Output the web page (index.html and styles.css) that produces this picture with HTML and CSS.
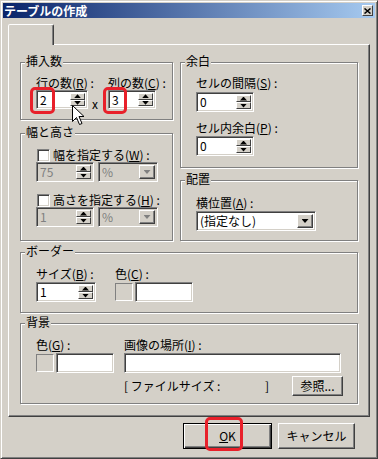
FILE: index.html
```html
<!DOCTYPE html>
<html lang="ja">
<head>
    <meta charset="UTF-8">
    <meta name="viewport" content="width=device-width, initial-scale=1.0">
    <title>テーブルの作成</title>
    <link rel="stylesheet" href="styles.css">
</head>
<body>
<div class="window">
    <div class="titlebar">
        <span class="title">テーブルの作成</span>
        <span class="close">
            <svg width="7" height="6" viewBox="0 0 7 6"><path d="M0.5 0.5 L6.5 5.5 M6.5 0.5 L0.5 5.5" stroke="#000" stroke-width="1.5"/></svg>
        </span>
    </div>

    <div class="body">
        <div class="tab"></div>
        <div class="panel">
            <div class="top">
                <div class="col-left">
                    <!-- 挿入数 -->
                    <div class="group g-insert">
                        <span class="legend">挿入数</span>
                        <div class="row row-end">
                            <div class="field w52">
                                <div class="lbl">行の数(<u>R</u>) :</div>
                                <div class="spin short"><span class="val">2</span><span class="arrows"><i class="up"></i><i class="dn"></i></span></div>
                            </div>
                            <span class="times">x</span>
                            <div class="field w48">
                                <div class="lbl">列の数(<u>C</u>) :</div>
                                <div class="spin short"><span class="val">3</span><span class="arrows"><i class="up"></i><i class="dn"></i></span></div>
                            </div>
                        </div>
                    </div>

                    <!-- 幅と高さ -->
                    <div class="group g-size">
                        <span class="legend">幅と高さ</span>
                        <div class="chkrow"><span class="chk"></span><span>幅を指定する(<u>W</u>) :</span></div>
                        <div class="ctlrow">
                            <div class="spin dis w58"><span class="val">75</span><span class="arrows"><i class="up"></i><i class="dn"></i></span></div>
                            <div class="combo dis w60"><span class="val">%</span><span class="drop"></span></div>
                        </div>
                        <div class="chkrow second"><span class="chk"></span><span>高さを指定する(<u>H</u>) :</span></div>
                        <div class="ctlrow">
                            <div class="spin dis w58"><span class="val">1</span><span class="arrows"><i class="up"></i><i class="dn"></i></span></div>
                            <div class="combo dis w60"><span class="val">%</span><span class="drop"></span></div>
                        </div>
                    </div>
                </div>

                <div class="col-right">
                    <!-- 余白 -->
                    <div class="group g-margin">
                        <span class="legend">余白</span>
                        <div class="lbl">セルの間隔(<u>S</u>) :</div>
                        <div class="spin w58 gap-top"><span class="val">0</span><span class="arrows"><i class="up"></i><i class="dn"></i></span></div>
                        <div class="lbl second">セル内余白(<u>P</u>) :</div>
                        <div class="spin w58 gap-top1"><span class="val">0</span><span class="arrows"><i class="up"></i><i class="dn"></i></span></div>
                    </div>

                    <!-- 配置 -->
                    <div class="group g-align">
                        <span class="legend">配置</span>
                        <div class="lbl">横位置(<u>A</u>) :</div>
                        <div class="combo w120 gap-top1"><span class="val">(指定なし)</span><span class="drop"></span></div>
                    </div>
                </div>
            </div>

            <!-- ボーダー -->
            <div class="group g-border">
                <span class="legend">ボーダー</span>
                <div class="row">
                    <div class="field w60">
                        <div class="lbl">サイズ(<u>B</u>) :</div>
                        <div class="spin gap-top1"><span class="val">1</span><span class="arrows"><i class="up"></i><i class="dn"></i></span></div>
                    </div>
                    <div class="field w78 color-field">
                        <div class="lbl">色(<u>C</u>) :</div>
                        <div class="colorpick gap-top1"><span class="swatch"></span><span class="tb w58"></span></div>
                    </div>
                </div>
            </div>

            <!-- 背景 -->
            <div class="group g-bg">
                <span class="legend">背景</span>
                <div class="row">
                    <div class="field w78">
                        <div class="lbl">色(<u>G</u>) :</div>
                        <div class="colorpick gap-top1"><span class="swatch"></span><span class="tb w58"></span></div>
                    </div>
                    <div class="field w217 img-field">
                        <div class="lbl">画像の場所(<u>I</u>) :</div>
                        <div class="tb gap-top1"></div>
                        <div class="fsrow">
                            <span class="fs">[ ファイルサイズ :</span>
                            <span class="fs-end">]</span>
                            <button class="btn browse">参照...</button>
                        </div>
                    </div>
                </div>
            </div>
        </div>

        <div class="buttons">
            <button class="btn default ok"><u>O</u>K</button>
            <button class="btn cancel">キャンセル</button>
        </div>
    </div>

    <!-- highlight marks and mouse pointer drawn over the dialog -->
    <span class="mark m-rows"></span>
    <span class="mark m-cols"></span>
    <span class="mark m-ok"></span>
    <svg class="pointer" width="13" height="21" viewBox="0 0 13 21">
        <path d="M0.5 0.5 L0.5 16.5 L4.5 12.5 L7.5 19.5 L10 18.5 L7 11.5 L12 11.5 Z" fill="#fff" stroke="#000" stroke-width="1" stroke-linejoin="miter"/>
    </svg>
</div>
</body>
</html>
```

FILE: styles.css
```css
* {
    box-sizing: border-box;
}
body {
    margin: 0;
    font-family: "Noto Sans CJK JP", "Liberation Sans", sans-serif;
    font-size: 12px;
    line-height: 14px;
    color: #000;
    background: #d4d0c8;
}
u {
    text-decoration: underline;
    text-underline-offset: 1px;
}

/* window frame */
.window {
    position: relative;
    width: 378px;
    height: 459px;
    padding: 2px;
    background: #d4d0c8;
    border: 1px solid;
    border-color: #d4d0c8 #404040 #404040 #d4d0c8;
    box-shadow: inset 1px 1px #fff, inset -1px -1px #808080;
}
.titlebar {
    display: flex;
    align-items: center;
    height: 15px;
    padding: 0 2px 0 1px;
    background: linear-gradient(to right, #0a246a, #a6caf0);
    color: #fff;
    font-weight: bold;
}
.title {
    flex: 1;
    line-height: 15px;
}
.close {
    display: flex;
    align-items: center;
    justify-content: center;
    width: 11px;
    height: 11px;
    background: #d4d0c8;
    border: 1px solid;
    border-color: #fff #404040 #404040 #fff;
}

.body {
    padding: 6px 5px 0;
}
.tab {
    position: relative;
    z-index: 1;
    width: 46px;
    height: 21px;
    margin-bottom: -1px;
    background: #d4d0c8;
    border: 1px solid;
    border-bottom: none;
    border-color: #fff #404040 transparent #fff;
    border-radius: 2px 2px 0 0;
    box-shadow: inset -1px 0 #808080;
}
.panel {
    height: 373px;
    padding: 17px 11px 0;
    border: 1px solid;
    border-color: #fff #404040 #404040 #fff;
    box-shadow: inset -1px -1px #808080;
}

/* group boxes */
.top {
    display: flex;
    gap: 7px;
}
.col-left {
    width: 153px;
}
.col-right {
    flex: 1;
}
.group {
    position: relative;
    padding-left: 15px;
    border: 1px solid #808080;
    box-shadow: inset 1px 1px #fff, 1px 1px #fff;
}
.legend {
    position: absolute;
    top: -9px;
    left: 4px;
    padding: 0 1px;
    background: #d4d0c8;
    white-space: nowrap;
}
.g-insert {
    height: 58px;
    padding-top: 13px;
}
.g-size {
    height: 108px;
    margin-top: 13px;
    padding-top: 14px;
}
.g-margin {
    height: 106px;
    padding-top: 13px;
}
.g-align {
    height: 61px;
    margin-top: 12px;
    padding-top: 15px;
}
.g-border {
    height: 61px;
    margin-top: 11px;
    padding-top: 14px;
}
.g-bg {
    height: 81px;
    margin-top: 10px;
    padding-top: 14px;
}

.row {
    display: flex;
    align-items: flex-start;
}
.row-end {
    align-items: flex-end;
}
.field {
    flex: none;
}
.lbl {
    white-space: nowrap;
}
.lbl.second {
    margin-top: 9px;
}
.gap-top {
    margin-top: 2px;
}
.gap-top1 {
    margin-top: 1px;
}
.times {
    width: 20px;
    padding: 4px 0 0 4px;
    margin-bottom: -4px;
    line-height: 19px;
}
.color-field {
    margin-left: 19px;
}
.img-field {
    margin-left: 10px;
}

.w48 { width: 48px; }
.w52 { width: 52px; }
.w58 { width: 58px; }
.w60 { width: 60px; }
.w78 { width: 78px; }
.w120 { width: 120px; }
.w217 { width: 217px; }

/* sunken controls */
.spin, .combo, .tb, .chk {
    background: #fff;
    border: 1px solid;
    border-color: #808080 #fff #fff #808080;
    box-shadow: inset 1px 1px #404040, inset -1px -1px #d4d0c8;
}
.spin, .combo {
    display: flex;
    align-items: center;
    height: 20px;
    padding: 2px 2px 2px 3px;
}
.field .spin {
    width: 100%;
}
.spin.short {
    height: 19px;
}
.val {
    flex: 1;
    min-width: 0;
    line-height: 14px;
    white-space: nowrap;
}
.dis {
    background: #d4d0c8;
    color: #808080;
}
.arrows {
    display: flex;
    flex-direction: column;
    align-self: stretch;
    width: 15px;
}
.arrows i, .drop {
    display: flex;
    align-items: center;
    justify-content: center;
    background: #d4d0c8;
    border: 1px solid;
    border-color: #fff #404040 #404040 #fff;
}
.arrows i {
    flex: 1;
}
.arrows i::after, .drop::after {
    content: "";
    width: 7px;
    height: 4px;
    background: #000;
}
.arrows .up::after {
    clip-path: polygon(50% 0, 100% 100%, 0 100%);
}
.arrows .dn::after, .drop::after {
    clip-path: polygon(0 0, 100% 0, 50% 100%);
}
.drop {
    align-self: stretch;
    width: 16px;
    box-shadow: inset -1px -1px #808080;
}
.combo.dis .drop::after {
    background: #808080;
}

.chkrow {
    display: flex;
    align-items: center;
    height: 14px;
    white-space: nowrap;
}
.chkrow.second {
    margin-top: 11px;
}
.chk {
    flex: none;
    width: 13px;
    height: 13px;
    margin: 0 3px 0 1px;
}
.ctlrow {
    display: flex;
    gap: 4px;
}

.colorpick {
    display: flex;
    align-items: center;
    gap: 2px;
    height: 20px;
}
.swatch {
    width: 18px;
    height: 18px;
    border: 1px solid;
    border-color: #808080 #fff #fff #808080;
}
.tb {
    display: block;
    height: 20px;
}

.fsrow {
    display: flex;
    align-items: center;
    margin-top: 3px;
    white-space: nowrap;
}
.fs {
    flex: none;
    width: 141px;
}
.fs-end {
    flex: none;
    width: 27px;
}

/* push buttons */
.btn {
    flex: none;
    padding: 0;
    font: inherit;
    color: #000;
    background: #d4d0c8;
    border: 1px solid;
    border-color: #fff #404040 #404040 #fff;
    box-shadow: inset -1px -1px #808080;
}
.browse {
    width: 51px;
    height: 20px;
}
.buttons {
    display: flex;
    justify-content: flex-end;
    gap: 6px;
    margin-top: 6px;
    padding-right: 15px;
}
.buttons .btn {
    height: 26px;
}
.ok {
    width: 89px;
}
.cancel {
    width: 77px;
}
.btn.default {
    border-color: #000;
    box-shadow: inset 1px 1px #fff, inset -1px -1px #404040, inset -2px -2px #808080;
}

/* red highlight marks over the dialog */
.mark {
    position: absolute;
    border: 3px solid #e8202a;
    border-radius: 5px;
}
.m-rows {
    left: 29px;
    top: 86px;
    width: 25px;
    height: 27px;
}
.m-cols {
    left: 102px;
    top: 86px;
    width: 24px;
    height: 27px;
}
.m-ok {
    left: 204px;
    top: 416px;
    width: 38px;
    height: 34px;
}
.pointer {
    position: absolute;
    left: 71px;
    top: 104px;
}
```
